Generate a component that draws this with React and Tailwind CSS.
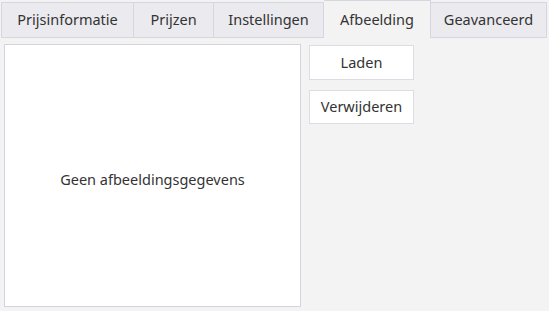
export default function App() {
  const tabs = [
    { label: "Prijsinformatie", w: "w-[133px] border-l" },
    { label: "Prijzen", w: "w-[80px]" },
    { label: "Instellingen", w: "w-[110px]" },
    { label: "Afbeelding", w: "w-[107px]", active: true },
    { label: "Geavanceerd", w: "w-[116px]" },
  ];
  return (
    <div className="w-[549px] h-[311px] bg-[#f3f3f3] overflow-hidden text-[14.5px] text-[#333] font-['Noto_Sans',sans-serif]">
      <div className="flex items-end h-[38px] pl-[1px]">
        {tabs.map((t) =>
          t.active ? (
            <div
              key={t.label}
              className={`${t.w} h-[38px] flex items-center justify-center bg-[#f3f3f3] border-t border-r border-[#d6d6e0]`}
            >
              {t.label}
            </div>
          ) : (
            <div
              key={t.label}
              className={`${t.w} h-[36px] flex items-center justify-center bg-[#eaeaef] border-t border-b border-r border-[#d6d6e0]`}
            >
              {t.label}
            </div>
          )
        )}
      </div>
      <div className="flex gap-[8px] pl-[4px] pt-[6px]">
        <div className="w-[297px] h-[263px] bg-white border border-[#d4d4e0] flex items-center justify-center pt-[8px]">
          Geen afbeeldingsgegevens
        </div>
        <div className="flex flex-col gap-[10px] pt-[1px]">
          <button className="w-[105px] h-[35px] bg-white border border-[#dcdce4] flex items-center justify-center">
            Laden
          </button>
          <button className="w-[105px] h-[34px] bg-white border border-[#dcdce4] flex items-center justify-center">
            Verwijderen
          </button>
        </div>
      </div>
    </div>
  );
}
